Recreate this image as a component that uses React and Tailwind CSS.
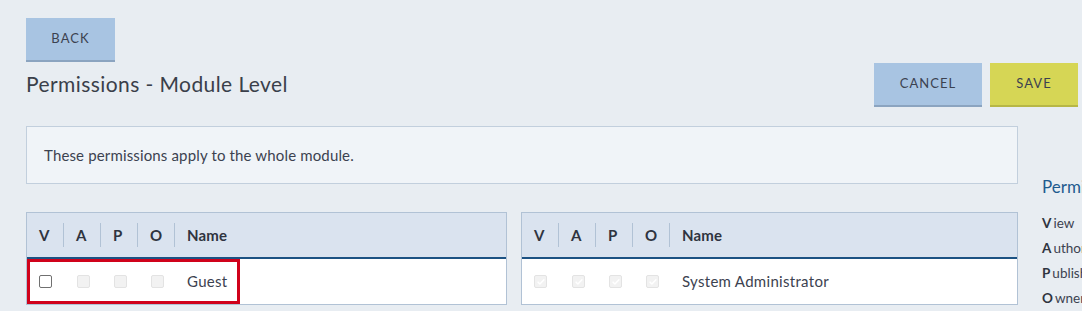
import React from 'react';

const font = { fontFamily: 'Lato, "Open Sans", sans-serif' };

const cols = ['V', 'A', 'P', 'O'];

const Box = ({ enabled, checked }) => {
  if (enabled) {
    return <span className="block w-[13px] h-[13px] rounded-[2px] border border-[#707070] bg-white" />;
  }
  return (
    <span className="flex items-center justify-center w-[13px] h-[13px] rounded-[2px] border border-[#e3e3e3] bg-[#f2f2f2]">
      {checked && (
        <svg viewBox="0 0 12 12" className="w-[10px] h-[10px]">
          <path d="M2.5 6.2l2.2 2.2 4.8-5" fill="none" stroke="#ffffff" strokeWidth="1.8" strokeLinecap="round" strokeLinejoin="round" />
        </svg>
      )}
    </span>
  );
};

const PermTable = ({ name, checked, firstEnabled, className }) => (
  <div className={`border border-[#b1c2d5] bg-white ${className}`}>
    <div className="flex items-center h-[46px] bg-[#dae3ef] border-b-[2px] border-b-[#1c5283] text-[15px] font-bold text-[#2f3440] tracking-[0.01em]">
      {cols.map((c) => (
        <div key={c} className="w-[37px] pl-[12px] border-r border-[#b1c2d5] h-[24px] flex items-center">
          {c}
        </div>
      ))}
      <div className="pl-[12px]">Name</div>
    </div>
    <div className="flex items-center h-[45px] text-[15px] text-[#3c4250] tracking-[0.02em]">
      {cols.map((c, i) => (
        <div key={c} className={`w-[37px] ${i === 0 ? 'pl-[12px]' : 'pl-[13px]'}`}>
          <Box enabled={firstEnabled && i === 0} checked={checked} />
        </div>
      ))}
      <div className="pl-[12px]">{name}</div>
    </div>
  </div>
);

export default function App() {
  return (
    <div className="w-[1082px] h-[311px] overflow-hidden bg-[#e8edf2] pl-[26px] pt-[18px]" style={font}>
      <button className="h-[44px] w-[89px] bg-[#a8c4e2] border-b-[2px] border-[#8ba4c0] text-[13px] tracking-[0.08em] text-[#3c4250]">
        BACK
      </button>

      <div className="flex items-end justify-between pr-[4px]">
        <h1 className="text-[21px] tracking-[0.02em] text-[#3a3f4a] leading-none mb-[13px] mt-[11px]">Permissions - Module Level</h1>
        <div className="flex gap-[8px]">
          <button className="h-[44px] w-[108px] bg-[#a8c4e2] border-b-[2px] border-[#8ba4c0] text-[13px] tracking-[0.08em] text-[#3c4250]">
            CANCEL
          </button>
          <button className="h-[44px] w-[88px] bg-[#d6d655] border-b-[2px] border-[#b7b746] text-[13px] tracking-[0.08em] text-[#3c4250]">
            SAVE
          </button>
        </div>
      </div>

      <div className="flex gap-[24px] mt-[19px]">
        <div className="w-[992px] shrink-0">
          <div className="h-[58px] flex items-center px-[17px] bg-[#f0f4f8] border border-[#c2cfdd] text-[15px] tracking-[0.01em] text-[#3c4250]">
            These permissions apply to the whole module.
          </div>

          <div className="flex gap-[14px] mt-[28px]">
            <div className="relative w-[481px]">
              <PermTable name="Guest" firstEnabled />
              <div className="absolute left-[1px] top-[47px] w-[213px] h-[45px] border-[3px] border-[#d0021b]" />
            </div>
            <PermTable name="System Administrator" checked className="flex-1" />
          </div>
        </div>

        <div className="pt-[48px] text-[#3c4250] shrink-0">
          <div className="text-[17px] text-[#1e5b8f] mb-[11px] whitespace-nowrap">Permission Legend</div>
          <ul className="text-[13.5px] leading-[25px] whitespace-nowrap">
            <li><b className="mr-[2px] text-[#2f3440]">V</b>iew</li>
            <li><b className="mr-[2px] text-[#2f3440]">A</b>uthor</li>
            <li><b className="mr-[2px] text-[#2f3440]">P</b>ublish</li>
            <li><b className="mr-[2px] text-[#2f3440]">O</b>wner</li>
          </ul>
        </div>
      </div>
    </div>
  );
}
